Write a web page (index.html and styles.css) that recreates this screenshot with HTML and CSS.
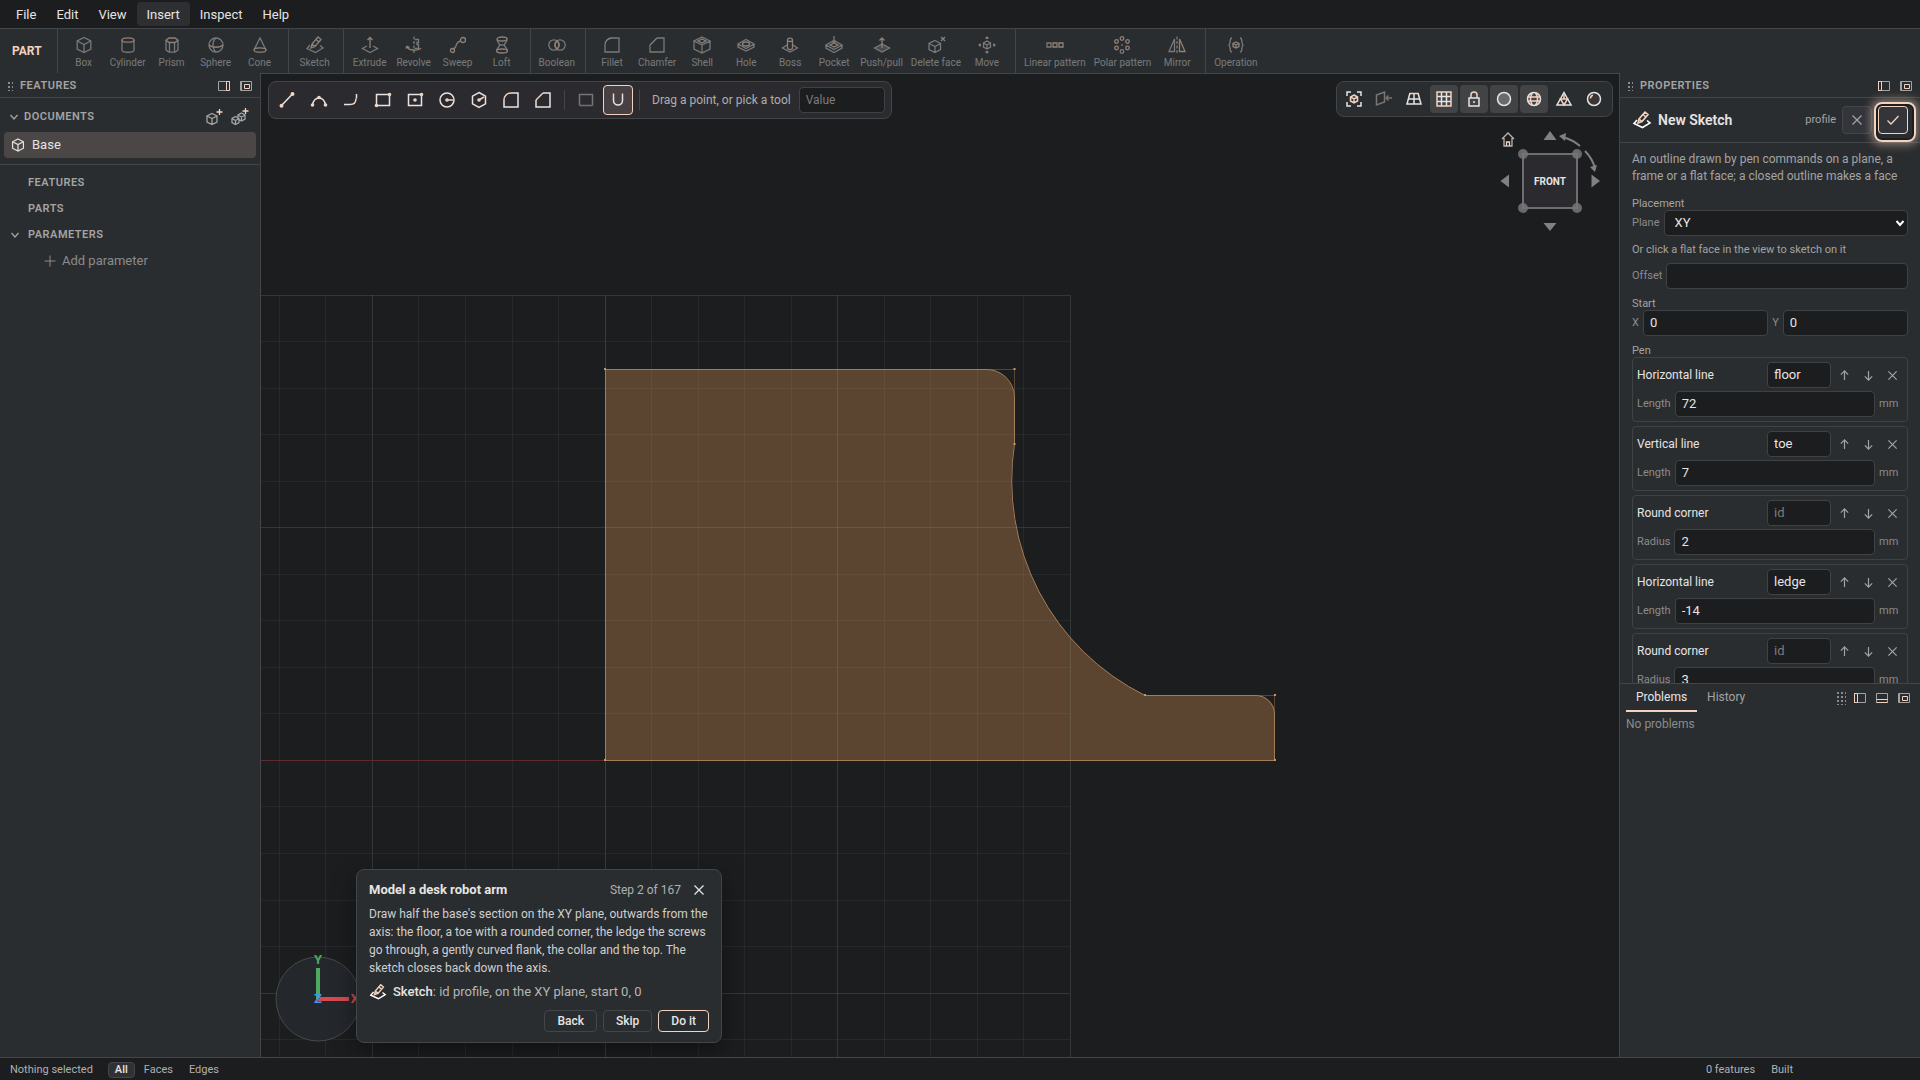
FILE: index.html
```html
<!DOCTYPE html>
<html lang="en">
<head>
<meta charset="utf-8">
<title>Base - Part</title>
<link rel="stylesheet" href="styles.css">
</head>
<body>
<svg class="sprite" aria-hidden="true">
  <symbol id="box" viewBox="0 0 20 20"><path d="M10 2.5 16.8 6v8L10 17.5 3.2 14V6Z"/><path d="M3.2 6 10 9.5 16.8 6M10 9.5v8"/></symbol>
  <symbol id="cylinder" viewBox="0 0 20 20"><path d="M4 5v10c0 3 12 3 12 0V5"/><ellipse class="t" cx="10" cy="5" rx="6" ry="2.2"/></symbol>
  <symbol id="prism" viewBox="0 0 20 20"><path d="M4 5.5v9.500l3 2.200h6l3-2.200V5.500M7.500 7.500v9.500M12.500 7.500v9.500"/><path class="t" d="M4 5.200 7 3h6l3 2.200-3 2.300H7Z"/></symbol>
  <symbol id="sphere" viewBox="0 0 20 20"><circle cx="10" cy="10" r="7"/><path d="M10 3c-4 3-4 11 0 14"/><path class="t" d="M3 10c3 3 11 3 14 0"/></symbol>
  <symbol id="cone" viewBox="0 0 20 20"><path d="M4 15 10 3l6 12"/><ellipse class="t" cx="10" cy="15" rx="6" ry="2.200"/></symbol>
  <symbol id="sketch" viewBox="0 0 20 20"><path d="m5 10-3 3.500 8.500 4L18 13l-3-2.500"/><path class="t" d="m6 13 1-4 6-7 3 2.500-6 7Zm1-4 3 2.500M11 4.500l3 2.500"/></symbol>
  <symbol id="extrude" viewBox="0 0 20 20"><path d="M7 11 2.500 13.500 10 17.500l7.500-4L13 11"/><path class="t" d="M10 13V2.500M7.500 5 10 2.500 12.500 5"/></symbol>
  <symbol id="revolve" viewBox="0 0 20 20"><path d="M10 1.500v3M10 6v3M10 10.500v3M10 15v3"/><path d="M11 4.500h3.500v3H13v2h1.500v4H11"/><path class="t" d="M3 11c0 5 12 5 14 2M3 11l-1 2.500M3 11l2.500 1.500"/></symbol>
  <symbol id="sweep" viewBox="0 0 20 20"><path d="M5 14c5-1 1-7 8-8"/><circle class="t" cx="15" cy="5" r="2.500"/><circle class="t" cx="4.500" cy="15.500" r="2"/></symbol>
  <symbol id="loft" viewBox="0 0 20 20"><ellipse class="t" cx="10" cy="4" rx="5" ry="2"/><ellipse class="t" cx="10" cy="16" rx="5.500" ry="2"/><path d="M5 4.500c0 3 2.500 3 2.500 5.500S4.500 13 4.500 16M15 4.500c0 3-2.500 3-2.500 5.500s3 3 3 6M7.500 10h5"/></symbol>
  <symbol id="boolean" viewBox="0 0 20 20"><circle cx="7" cy="10" r="5.200"/><circle cx="13" cy="10" r="5.200"/><path class="t" d="M10 6c-2.500 2.500-2.500 5.500 0 8 2.500-2.500 2.500-5.500 0-8Z"/></symbol>
  <symbol id="fillet" viewBox="0 0 20 20"><path d="M10 3h7v14H3v-7"/><path class="t" d="M3 10c0-4 3-7 7-7"/></symbol>
  <symbol id="chamfer" viewBox="0 0 20 20"><path d="M10 3h7v14H3v-7"/><path class="t" d="m3 10 7-7"/></symbol>
  <symbol id="shell" viewBox="0 0 20 20"><path d="M2 6v8l8 4 8-4V6M10 10v8M2 6l8 4 8-4-8-4Z"/><path class="t" d="m6 6 4 2 4-2-4-2Z"/></symbol>
  <symbol id="hole" viewBox="0 0 20 20"><path d="M2 9v3l8 4 8-4V9M2 9l8 4.500L18 9l-8-4.500Z"/><ellipse class="t" cx="10" cy="9" rx="3.500" ry="2"/></symbol>
  <symbol id="boss" viewBox="0 0 20 20"><path d="m7 10-4.500 3 7.500 4 7.500-4-4.500-3"/><path class="t" d="M7.500 5v8c0 2 5 2 5 0V5c0-2.500-5-2.500-5 0Zm0 0c0 2 5 2 5 0"/></symbol>
  <symbol id="pocket" viewBox="0 0 20 20"><path d="M2 10v3l8 4.500 8-4.500v-3M2 10l8 4.500 8-4.500-8-4.500Z"/><path class="t" d="m6 10 4 2 4-2-4-2Z"/><path d="M10 1v7M8 6l2 2 2-2"/></symbol>
  <symbol id="pushpull" viewBox="0 0 20 20"><path class="dim" d="m2.500 13 7.500-4 7.500 4-7.500 4Z"/><path class="t" d="M10 13V3M7.500 5.500 10 3l2.500 2.500"/></symbol>
  <symbol id="deleteface" viewBox="0 0 20 20"><path d="M9 5.500 14.500 8.500v6L9 17.500l-6-3v-6ZM3 8.500l6 3 5.500-3M9 11.500v6"/><path class="t" d="m15 2 4 4m0-4-4 4"/></symbol>
  <symbol id="move" viewBox="0 0 20 20"><path d="m10 6 3.500 2v4L10 14l-3.500-2V8ZM6.500 8l3.500 2 3.500-2M10 10v4"/><path class="t" d="M10 4V1.500M10 16v2.500M4 10H1.500M16 10h2.500M8.500 3h3M8.500 17h3M3 8.500v3M17 8.500v3"/></symbol>
  <symbol id="linear" viewBox="0 0 20 20"><path d="M2 8h4v4H2Z"/><path class="t" d="M8 8h4v4H8ZM14 8h4v4h-4Z"/></symbol>
  <symbol id="polar" viewBox="0 0 20 20"><g class="t"><circle cx="10" cy="3.500" r="1.800"/><circle cx="15.500" cy="6.500" r="1.800"/><circle cx="15.500" cy="13" r="1.800"/><circle cx="4.500" cy="6.500" r="1.800"/><circle cx="4.500" cy="13" r="1.800"/></g><circle cx="10" cy="16.500" r="1.800"/><path d="M10 9v2"/></symbol>
  <symbol id="mirror" viewBox="0 0 20 20"><path d="M7.500 4v12.500H2Z"/><path class="t" d="M12.500 4v12.500H18Z"/><path d="M10 1.500v3M10 6v3M10 10.500v3M10 15v3"/></symbol>
  <symbol id="operation" viewBox="0 0 20 20"><path d="M6 3C3 3 5 9 3 10c2 1 0 7 3 7M14 3c3 0 1 6 3 7-2 1 0 7-3 7"/><path class="t" d="m10 7 3 1.500v3L10 13l-3-1.500v-3ZM7 8.500l3 1.500 3-1.500M10 10v3"/></symbol>
  <symbol id="line" viewBox="0 0 20 20"><path d="M4.500 15.500 15.500 4"/><circle class="d" cx="4.500" cy="15.800" r="2"/><circle class="d" cx="15.500" cy="4" r="2"/></symbol>
  <symbol id="arc" viewBox="0 0 20 20"><path d="M3.500 15c1-5 4-7 6.500-7s5.500 2 6.500 7"/><circle class="d" cx="3.500" cy="15" r="1.800"/><circle class="d" cx="10" cy="7.500" r="1.800"/><circle class="d" cx="16.500" cy="15" r="1.800"/></symbol>
  <symbol id="curve" viewBox="0 0 20 20"><path d="M3 14.500h6"/><path class="t" d="M9 14.500c4 0 6-2 6-6"/><path d="M15.500 8.500V4"/></symbol>
  <symbol id="rect" viewBox="0 0 20 20"><path d="M3.500 4.500h13v11h-13Z"/><circle class="d" cx="3.500" cy="15.500" r="1.800"/><circle class="d" cx="16.500" cy="4.500" r="1.800"/></symbol>
  <symbol id="crect" viewBox="0 0 20 20"><path d="M3.500 4.500h13v11h-13Z"/><circle class="d" cx="10" cy="10" r="1.800"/><circle class="d" cx="16.500" cy="4.500" r="1.800"/></symbol>
  <symbol id="circle" viewBox="0 0 20 20"><circle cx="10" cy="10" r="7"/><circle class="d" cx="10" cy="10" r="1.800"/><path class="t" d="M10 10h6"/></symbol>
  <symbol id="hexagon" viewBox="0 0 20 20"><path d="m10 2.500 6.500 3.700v7.600L10 17.500l-6.500-3.700V6.200Z"/><circle class="d" cx="10" cy="10" r="1.800"/><path class="t" d="m10 10 5-3"/></symbol>
  <symbol id="square" viewBox="0 0 20 20"><path d="M3.500 15.500v-11h13v11"/><path class="t" d="M3.500 15.500h13"/></symbol>
  <symbol id="magnet" viewBox="0 0 20 20"><path d="M5.500 7v3.500a4.500 4.500 0 0 0 9 0V7"/><path class="t" d="M5.500 3.500V7M14.500 3.500V7"/></symbol>
  <symbol id="fit" viewBox="0 0 20 20"><path d="M3 7V3h4M13 3h4v4M17 13v4h-4M7 17H3v-4"/><path class="t" d="m10 6 3.500 2v4L10 14l-3.500-2V8ZM6.500 8l3.500 2 3.500-2M10 10v4"/></symbol>
  <symbol id="normal" viewBox="0 0 20 20"><path d="m2.500 6 8-3v10l-8 3Z"/><path class="t" d="M18 9h-6M14.500 6.500 12 9l2.500 2.500"/></symbol>
  <symbol id="persp" viewBox="0 0 20 20"><path d="M6 4 3 15h14L14 4M4.500 10h11M10 4v11"/><path class="t" d="M5.500 4.500h9"/></symbol>
  <symbol id="grid" viewBox="0 0 20 20"><path d="M7.500 3v14M12.500 3v14M3 7.500h14M3 12.500h14"/><path class="t" d="M3 3h14v14H3Z"/></symbol>
  <symbol id="lock" viewBox="0 0 20 20"><path d="M5 9h10v8H5ZM10 12v2"/><path class="t" d="M7 9V6c0-4 6-4 6 0v3"/></symbol>
  <symbol id="disc" viewBox="0 0 20 20"><circle class="dim" cx="10" cy="10" r="6.500"/></symbol>
  <symbol id="globe" viewBox="0 0 20 20"><circle cx="10" cy="10" r="6.500"/><path class="t" d="M3.500 8h13M3.500 12h13M8.500 3.500c-2.500 4-2.500 9 0 13M11.500 3.500c2.500 4 2.500 9 0 13"/></symbol>
  <symbol id="mesh" viewBox="0 0 20 20"><path d="M10 3.500 17 16H3Z"/><path class="t" d="M6.500 10h7L10 16ZM10 4v6"/></symbol>
  <symbol id="ball" viewBox="0 0 20 20"><circle class="dark" cx="10" cy="10" r="6.500"/><path class="t" d="M6.500 9.500c0-1.500 1-3 2.500-3.300"/></symbol>
  <symbol id="dockr" viewBox="0 0 12 10"><path d="M.500.500h11v9H.500Z"/><path class="t" d="M8.500 1v8M11.500.500v9M8.500.500h3M8.500 9.500h3"/></symbol>
  <symbol id="dockl" viewBox="0 0 12 10"><path d="M.500.500h11v9H.500Z"/><path class="t" d="M3.500 1v8M.500.500v9M.500.500h3M.500 9.500h3"/></symbol>
  <symbol id="dockb" viewBox="0 0 12 10"><path d="M.500.500h11v9H.500Z"/><path class="t" d="M.500 6.500h11M.500 9.500h11"/></symbol>
  <symbol id="float" viewBox="0 0 12 10"><path d="M.500.500h11v9H.500ZM1.500 1v8"/><path class="t" d="M4.500 3.500h5v4h-5Z"/></symbol>
  <symbol id="chevron" viewBox="0 0 10 10"><path d="m1.500 3 3.500 4 3.500-4"/></symbol>
  <symbol id="adddoc" viewBox="0 0 20 20"><path d="M8 6.500 13 9v6L8 17.500 3 15V9ZM3 9l5 2.500L13 9M8 11.500v6"/><path class="t" d="M15.500 2v6M12.500 5h6"/></symbol>
  <symbol id="addasm" viewBox="0 0 20 20"><path d="m5.500 9.500 3.500 2v4l-3.500 2-3.500-2v-4ZM2 11.500l3.500 2 3.500-2M5.500 13.500v4M11.500 6l3.500 2v4l-3.500 2L8 12V8ZM8 8l3.500 2L15 8M11.500 10v4"/><path class="t" d="M15.500 1v6M12.500 4h6"/></symbol>
  <symbol id="plus" viewBox="0 0 12 12"><path d="M6 .500v11M.500 6h11"/></symbol>
  <symbol id="x" viewBox="0 0 12 12"><path d="m1.500 1.500 9 9m0-9-9 9"/></symbol>
  <symbol id="check" viewBox="0 0 12 12"><path d="m.500 6.500 3.500 3.500L11.500 2"/></symbol>
  <symbol id="up" viewBox="0 0 12 12"><path d="M6 11V1M2 5l4-4 4 4"/></symbol>
  <symbol id="down" viewBox="0 0 12 12"><path d="M6 1v10M2 7l4 4 4-4"/></symbol>
</svg>

<div class="app">
  <nav class="menubar">
    <button>File</button><button>Edit</button><button>View</button><button class="open">Insert</button><button>Inspect</button><button>Help</button>
  </nav>

  <div class="ribbon">
    <strong class="mode">PART</strong>
    <div class="group">
      <button><svg><use href="#box"/></svg>Box</button>
      <button><svg><use href="#cylinder"/></svg>Cylinder</button>
      <button><svg><use href="#prism"/></svg>Prism</button>
      <button><svg><use href="#sphere"/></svg>Sphere</button>
      <button><svg><use href="#cone"/></svg>Cone</button>
    </div>
    <div class="group"><button><svg><use href="#sketch"/></svg>Sketch</button></div>
    <div class="group">
      <button><svg><use href="#extrude"/></svg>Extrude</button>
      <button><svg><use href="#revolve"/></svg>Revolve</button>
      <button><svg><use href="#sweep"/></svg>Sweep</button>
      <button><svg><use href="#loft"/></svg>Loft</button>
    </div>
    <div class="group"><button><svg><use href="#boolean"/></svg>Boolean</button></div>
    <div class="group">
      <button><svg><use href="#fillet"/></svg>Fillet</button>
      <button><svg><use href="#chamfer"/></svg>Chamfer</button>
      <button><svg><use href="#shell"/></svg>Shell</button>
      <button><svg><use href="#hole"/></svg>Hole</button>
      <button><svg><use href="#boss"/></svg>Boss</button>
      <button><svg><use href="#pocket"/></svg>Pocket</button>
      <button><svg><use href="#pushpull"/></svg>Push/pull</button>
      <button><svg><use href="#deleteface"/></svg>Delete face</button>
      <button><svg><use href="#move"/></svg>Move</button>
    </div>
    <div class="group">
      <button><svg><use href="#linear"/></svg>Linear pattern</button>
      <button><svg><use href="#polar"/></svg>Polar pattern</button>
      <button><svg><use href="#mirror"/></svg>Mirror</button>
    </div>
    <div class="group"><button><svg><use href="#operation"/></svg>Operation</button></div>
  </div>

  <main class="workspace">
    <aside class="side left">
      <header class="panel-head">
        <span class="grip"></span><h2>FEATURES</h2>
        <button aria-label="Dock right"><svg><use href="#dockr"/></svg></button>
        <button aria-label="Float"><svg><use href="#float"/></svg></button>
      </header>
      <section class="documents">
        <div class="tree-head">
          <svg class="chev"><use href="#chevron"/></svg><h3>DOCUMENTS</h3>
          <button aria-label="Add part"><svg><use href="#adddoc"/></svg></button>
          <button aria-label="Add assembly"><svg><use href="#addasm"/></svg></button>
        </div>
        <button class="doc"><svg><use href="#box"/></svg>Base</button>
      </section>
      <section class="tree">
        <h3>FEATURES</h3>
        <h3>PARTS</h3>
        <h3><svg class="chev"><use href="#chevron"/></svg>PARAMETERS</h3>
        <button class="add"><svg><use href="#plus"/></svg>Add parameter</button>
      </section>
    </aside>

    <section class="viewport">
      <svg class="scene" viewBox="261 74 1358 983" preserveAspectRatio="xMidYMid slice">
        <path class="profile" d="M605 760H1275V714A19 19 0 0 0 1256 695H1145A240 240 0 0 1 1014 444V397A28 28 0 0 0 986 369H605Z"/>
        <path class="minor" d="M279.500 295V1060M325.500 295V1060M418.500 295V1060M465.500 295V1060M512.500 295V1060M558.500 295V1060M651.500 295V1060M698.500 295V1060M744.500 295V1060M791.500 295V1060M884.500 295V1060M930.500 295V1060M977.500 295V1060M1023.500 295V1060M260 341.500H1070M260 388.500H1070M260 434.500H1070M260 481.500H1070M260 574.500H1070M260 620.500H1070M260 667.500H1070M260 713.500H1070M260 806.500H1070M260 853.500H1070M260 900.500H1070M260 946.500H1070M260 1039.500H1070"/>
        <path class="major" d="M372.500 295V1060M837.500 295V1060M1070.500 295V1060M260 295.500H1070M260 527.500H1070M260 993.500H1070"/>
        <path class="axis-x" d="M260 760.500H605"/>
        <path class="axis-z" d="M605.500 295V369M605.500 761V1060"/>
        <path class="guide" d="M986 369.500H1014.500V397M1256 695.500H1274.500V714"/>
        <path class="outline" d="M605.500 760.500H1274.500V714A19 19 0 0 0 1256 695.500H1145A240 240 0 0 1 1014.500 444V397A28 28 0 0 0 986 369.500H605.500Z"/>
        <path class="points" d="M604 760h2M1274 760h2M1274 695h2M1144 695h2M1013.500 444h2M1013.500 369h2M604 369h2"/>
      </svg>

      <div class="overlay top">
        <div class="sketchbar">
          <button aria-label="Line"><svg><use href="#line"/></svg></button>
          <button aria-label="Arc"><svg><use href="#arc"/></svg></button>
          <button aria-label="Tangent arc"><svg><use href="#curve"/></svg></button>
          <button aria-label="Rectangle"><svg><use href="#rect"/></svg></button>
          <button aria-label="Centre rectangle"><svg><use href="#crect"/></svg></button>
          <button aria-label="Circle"><svg><use href="#circle"/></svg></button>
          <button aria-label="Polygon"><svg><use href="#hexagon"/></svg></button>
          <button aria-label="Fillet"><svg><use href="#fillet"/></svg></button>
          <button aria-label="Chamfer"><svg><use href="#chamfer"/></svg></button>
          <i class="sep"></i>
          <button class="off" aria-label="Construction"><svg><use href="#square"/></svg></button>
          <button class="on" aria-label="Snap"><svg><use href="#magnet"/></svg></button>
          <i class="sep"></i>
          <label for="value">Drag a point, or pick a tool</label>
          <input id="value" placeholder="Value">
        </div>
        <div class="viewbar">
          <button aria-label="Fit"><svg><use href="#fit"/></svg></button>
          <button class="off" aria-label="Look at face"><svg><use href="#normal"/></svg></button>
          <button aria-label="Perspective"><svg><use href="#persp"/></svg></button>
          <button class="on" aria-label="Grid"><svg><use href="#grid"/></svg></button>
          <button class="on" aria-label="Lock"><svg><use href="#lock"/></svg></button>
          <button class="on" aria-label="Shaded"><svg><use href="#disc"/></svg></button>
          <button class="on" aria-label="Edges"><svg><use href="#globe"/></svg></button>
          <button aria-label="Mesh"><svg><use href="#mesh"/></svg></button>
          <button aria-label="Material"><svg><use href="#ball"/></svg></button>
        </div>
      </div>

      <svg class="cube" viewBox="1495 125 110 110">
        <path class="home" d="m1502 139 6-6 6 6M1504 138v8h8v-8"/><path class="home-door" d="M1506.500 146v-4h3v4"/>
        <path class="solid" d="m1550 131 6.500 9h-13ZM1550 231l6.500-8h-13ZM1500.500 181l8.500-6.500v13ZM1600 181l-8.500-6.500v13Z"/>
        <rect x="1523" y="154" width="54" height="54"/>
        <g class="corner"><circle cx="1523" cy="154" r="5"/><circle cx="1577" cy="154" r="5"/><circle cx="1523" cy="208" r="5"/><circle cx="1577" cy="208" r="5"/></g>
        <path class="turn" d="M1563 137q10 3 17 9M1585 151q8 8 10 18"/>
        <path class="solid" d="m1559 136 7-3-1 8ZM1595 172l-5-5 7-2Z"/>
        <text x="1550" y="185">FRONT</text>
      </svg>

      <svg class="triad" viewBox="275 952 88 92">
        <circle cx="318" cy="999" r="42"/>
        <path class="gy" d="M318 968v31"/><path class="gx" d="M318 999h31"/>
        <text class="ty" x="318" y="964">Y</text><text class="tx" x="355" y="1003">X</text><text class="tz" x="318" y="1003">Z</text>
      </svg>

      <article class="tour">
        <header><h2>Model a desk robot arm</h2><span>Step 2 of 167</span><button aria-label="Close"><svg><use href="#x"/></svg></button></header>
        <p>Draw half the base's section on the XY plane, outwards from the axis: the floor, a toe with a rounded corner, the ledge the screws go through, a gently curved flank, the collar and the top. The sketch closes back down the axis.</p>
        <div class="what"><svg><use href="#sketch"/></svg><span><b>Sketch</b>: id profile, on the XY plane, start 0, 0</span></div>
        <footer><button>Back</button><button>Skip</button><button class="primary">Do it</button></footer>
      </article>
    </section>

    <aside class="side right">
      <section class="props">
        <header class="panel-head">
          <span class="grip"></span><h2>PROPERTIES</h2>
          <button aria-label="Dock left"><svg><use href="#dockl"/></svg></button>
          <button aria-label="Float"><svg><use href="#float"/></svg></button>
        </header>
        <div class="op-head">
          <svg class="op-icon"><use href="#sketch"/></svg><h2>New Sketch</h2><span>profile</span>
          <button class="cancel" aria-label="Cancel"><svg><use href="#x"/></svg></button>
          <button class="accept" aria-label="Accept"><svg><use href="#check"/></svg></button>
        </div>
        <form class="fields">
          <p class="about">An outline drawn by pen commands on a plane, a frame or a flat face; a closed outline makes a face</p>
          <h4>Placement</h4>
          <div class="row"><label for="plane">Plane</label><div class="pick"><select id="plane"><option>XY</option></select><svg><use href="#chevron"/></svg></div></div>
          <p class="hint">Or click a flat face in the view to sketch on it</p>
          <div class="row"><label for="offset">Offset</label><input id="offset"></div>
          <h4 class="spaced">Start</h4>
          <div class="row"><label for="sx">X</label><input id="sx" value="0"><label for="sy">Y</label><input id="sy" value="0"></div>
          <h4 class="spaced">Pen</h4>
          <div class="pens">
            <fieldset>
              <div class="pen-head"><span>Horizontal line</span><input aria-label="id" placeholder="id" value="floor"><button type="button" aria-label="Up"><svg><use href="#up"/></svg></button><button type="button" aria-label="Down"><svg><use href="#down"/></svg></button><button type="button" aria-label="Remove"><svg><use href="#x"/></svg></button></div>
              <div class="row"><label for="p1">Length</label><input id="p1" value="72"><span>mm</span></div>
            </fieldset>
            <fieldset>
              <div class="pen-head"><span>Vertical line</span><input aria-label="id" placeholder="id" value="toe"><button type="button" aria-label="Up"><svg><use href="#up"/></svg></button><button type="button" aria-label="Down"><svg><use href="#down"/></svg></button><button type="button" aria-label="Remove"><svg><use href="#x"/></svg></button></div>
              <div class="row"><label for="p2">Length</label><input id="p2" value="7"><span>mm</span></div>
            </fieldset>
            <fieldset>
              <div class="pen-head"><span>Round corner</span><input aria-label="id" placeholder="id"><button type="button" aria-label="Up"><svg><use href="#up"/></svg></button><button type="button" aria-label="Down"><svg><use href="#down"/></svg></button><button type="button" aria-label="Remove"><svg><use href="#x"/></svg></button></div>
              <div class="row"><label for="p3">Radius</label><input id="p3" value="2"><span>mm</span></div>
            </fieldset>
            <fieldset>
              <div class="pen-head"><span>Horizontal line</span><input aria-label="id" placeholder="id" value="ledge"><button type="button" aria-label="Up"><svg><use href="#up"/></svg></button><button type="button" aria-label="Down"><svg><use href="#down"/></svg></button><button type="button" aria-label="Remove"><svg><use href="#x"/></svg></button></div>
              <div class="row"><label for="p4">Length</label><input id="p4" value="-14"><span>mm</span></div>
            </fieldset>
            <fieldset>
              <div class="pen-head"><span>Round corner</span><input aria-label="id" placeholder="id"><button type="button" aria-label="Up"><svg><use href="#up"/></svg></button><button type="button" aria-label="Down"><svg><use href="#down"/></svg></button><button type="button" aria-label="Remove"><svg><use href="#x"/></svg></button></div>
              <div class="row"><label for="p5">Radius</label><input id="p5" value="3"><span>mm</span></div>
            </fieldset>
          </div>
        </form>
      </section>
      <section class="issues">
        <header>
          <button class="tab active">Problems</button><button class="tab">History</button>
          <span class="grip wide"></span>
          <button class="dock" aria-label="Dock left"><svg><use href="#dockl"/></svg></button>
          <button class="dock" aria-label="Dock bottom"><svg><use href="#dockb"/></svg></button>
          <button class="dock" aria-label="Float"><svg><use href="#float"/></svg></button>
        </header>
        <p>No problems</p>
      </section>
    </aside>
  </main>

  <footer class="status">
    <span>Nothing selected</span>
    <div class="filter"><button class="on">All</button><button>Faces</button><button>Edges</button></div>
    <span class="count">0 features</span><span class="built">Built</span>
  </footer>
</div>
</body>
</html>
```
FILE: styles.css
```css
:root {
  --bg: #1c1d1f;
  --panel: #2a2d2f;
  --line: #434648;
  --text: #e6e4e3;
  --muted: #a3a3a3;
  --faint: #8a8b8c;
  --accent: #f3d3c0;
}
* { box-sizing: border-box; margin: 0; }
body { background: var(--bg); color: var(--text); font: 12px/16px Roboto, sans-serif; }
button, input, select { font: inherit; color: inherit; }
button { display: flex; align-items: center; justify-content: center; padding: 0; border: 0; background: none; }
svg { flex: none; fill: none; stroke: currentColor; stroke-width: 1.3; }
.sprite { position: absolute; width: 0; height: 0; }
.t { stroke: var(--accent); }
.d { fill: var(--accent); stroke: none; }
.dim { fill: #6a6a6c; }
.dark { fill: #3a3636; }
.app { display: flex; flex-direction: column; height: 100vh; }

.menubar { display: flex; height: 28px; padding: 2px 6px; }
.menubar button { padding: 1px 10px 0; font-size: 13px; border-radius: 4px; }
.menubar .open { background: #2e2f32; }

.ribbon { display: flex; height: 45px; background: var(--panel); border-top: 1px solid var(--line); }
.mode { display: flex; align-items: center; padding: 0 15px 0 12px; font-size: 12px; font-weight: 700; color: var(--accent); }
.group { display: flex; padding: 0 6px 0 4px; border-left: 1px solid var(--line); }
.group button { flex-direction: column; min-width: 44px; padding: 2px 4px 0; gap: 1px; font-size: 10px; line-height: 14px; color: #c4c4c4; opacity: .5; }
.group svg { width: 20px; height: 20px; }

.workspace { flex: 1; min-height: 0; display: grid; grid-template-columns: 260px minmax(0, 1fr) 300px; background: var(--panel); }
.side { min-height: 0; color: var(--muted); }
.panel-head { display: flex; align-items: center; height: 25px; padding: 2px 3px 0 7px; border-bottom: 1px solid var(--line); }
.panel-head h2 { flex: 1; margin-left: 7px; font-size: 11px; font-weight: 600; letter-spacing: .5px; }
.panel-head button { width: 22px; }
.panel-head svg, .dock svg { width: 12px; height: 10px; stroke-width: 1; }
.grip { width: 6px; height: 10px; background: radial-gradient(circle, #8a8b8c 1px, transparent 1px) 0 0 / 4px 4px; }
.grip.wide { width: 10px; height: 14px; margin: 0 3px 0 auto; }
h3 { display: flex; align-items: center; font-size: 11px; font-weight: 600; letter-spacing: .5px; }
.chev { width: 10px; height: 10px; }
.documents { padding-bottom: 6px; border-bottom: 1px solid var(--line); }
.tree-head { display: flex; align-items: center; height: 34px; padding: 3px 10px 0 9px; gap: 6px; }
.tree-head h3 { flex: 1; margin-left: -1px; }
.tree-head svg:not(.chev) { width: 20px; height: 20px; }
.doc { justify-content: flex-start; width: calc(100% - 8px); height: 26px; margin-left: 4px; padding-left: 6px; gap: 6px; font-size: 13px; color: var(--text); background: #4b4747; border-radius: 4px; }
.doc svg { width: 16px; height: 16px; stroke-width: 1.5; }
.tree { padding-top: 5px; }
.tree h3 { height: 26px; padding-left: 28px; }
.tree .chev { margin: 0 8px 0 -18px; }
.add { height: 26px; margin-left: 44px; gap: 6px; font-size: 13px; color: var(--faint); }
.add svg { width: 12px; height: 12px; stroke-width: 1; }

.viewport { position: relative; overflow: hidden; background: var(--bg); border: 1px solid var(--line); border-bottom: 0; }
.scene { position: absolute; inset: 0; width: 100%; height: 100%; stroke-width: 1; }
.profile { fill: #5b4430; stroke: none; }
.minor { stroke: rgba(170, 195, 190, .08); }
.major { stroke: rgba(170, 195, 190, .16); }
.axis-x { stroke: #5a2c30; }
.axis-z { stroke: #263f5c; }
.guide { stroke: #5b4430; }
.outline { stroke: #a37c58; }
.points { stroke: #cc9365; stroke-width: 2; }

.overlay.top { position: absolute; inset: 7px 6px auto 7px; display: flex; justify-content: space-between; align-items: flex-start; }
.sketchbar, .viewbar { display: flex; align-items: center; gap: 2px; border: 1px solid var(--line); border-radius: 8px; }
.sketchbar { height: 38px; padding: 0 6px 0 3px; background: #2b2b2f; }
.sketchbar button { width: 30px; height: 30px; border-radius: 4px; }
.sketchbar svg, .viewbar svg { width: 20px; height: 20px; stroke-width: 1.5; }
.sketchbar .on { background: #474144; border: 1px solid var(--accent); }
.off { opacity: .4; }
.sep { width: 1px; height: 20px; margin: 0 4px; background: var(--line); }
.sketchbar label { margin: 0 6px; color: #aeaeae; }
input, select { min-width: 0; height: 26px; padding: 0 6px 2px; background: var(--bg); border: 1px solid #3f4244; border-radius: 4px; font-size: 13px; }
input::placeholder { color: #7b7b7c; opacity: 1; }
.sketchbar input { width: 86px; padding-bottom: 0; font-size: 12px; }
.viewbar { height: 36px; padding: 0 4px 0 3px; background: var(--panel); }
.viewbar button { width: 28px; height: 28px; border-radius: 4px; }
.viewbar .on { background: #414345; }

.cube { position: absolute; top: 51px; right: 14px; width: 110px; height: 110px; }
.cube rect { fill: #2b2b2f; stroke: #6e6e70; stroke-width: 2; }
.corner { fill: #777779; stroke: none; opacity: .85; }
.solid { fill: #818182; stroke: none; }
.turn { stroke: #818182; stroke-width: 2; }
.home { stroke: #b5b5b5; }
.home-door { stroke: var(--accent); }
.cube text { fill: #e6e4e3; stroke: none; font-size: 10px; font-weight: 700; text-anchor: middle; }
.triad { position: absolute; left: 14px; bottom: 13px; width: 88px; height: 92px; }
.triad circle { fill: #24272c; stroke: #46494c; stroke-width: 1; }
.triad path { stroke-width: 4; }
.triad text { stroke: none; font-size: 13px; font-weight: 700; text-anchor: middle; }
.triad .gy { stroke: #4caa61; }
.triad .gx { stroke: #d84a4f; }
.triad .ty { fill: #4caa61; }
.triad .tx { fill: #d84a4f; }
.triad .tz { fill: #3c96ee; }

.tour { position: absolute; left: 95px; bottom: 14px; width: 366px; padding: 9px 12px 10px; background: var(--panel); border: 1px solid var(--line); border-radius: 8px; box-shadow: 0 8px 24px rgba(0, 0, 0, .4); }
.tour header { display: flex; align-items: center; height: 22px; gap: 12px; }
.tour h2 { flex: 1; font-size: 13px; font-weight: 700; }
.tour header span { color: #b0b0b0; }
.tour header button { width: 12px; margin-right: 4px; }
.tour header svg { width: 12px; height: 12px; }
.tour p { margin: 4px 0 1px; line-height: 18px; color: #cfcfcf; }
.what { display: flex; align-items: center; height: 28px; gap: 6px; font-size: 13px; color: #b5b5b5; }
.what svg { width: 18px; height: 18px; color: #fff; stroke-width: 1.6; }
.what b { font-weight: 500; color: var(--text); }
.tour footer { display: flex; justify-content: flex-end; gap: 6px; margin-top: 4px; }
.tour footer button { height: 22px; padding: 0 12px; font-weight: 500; border: 1px solid var(--line); border-radius: 4px; }
.tour footer .primary { border-color: var(--accent); }

.right { display: grid; grid-template-rows: minmax(0, 1fr) 38%; }
.props { display: flex; flex-direction: column; min-height: 0; overflow: hidden; }
.panel-head, .op-head { flex: none; }
.op-head { display: flex; align-items: center; height: 45px; padding: 0 12px; border-bottom: 1px solid var(--line); }
.op-icon { width: 20px; height: 20px; color: #fff; stroke-width: 1.6; }
.op-head h2 { flex: 1; margin-left: 6px; font-size: 14px; font-weight: 600; color: var(--text); }
.op-head span { font-size: 11px; margin-right: 6px; }
.op-head button { width: 30px; height: 28px; background: #33353a; border: 1px solid var(--line); border-radius: 4px; }
.op-head button svg { width: 12px; height: 12px; }
.op-head .accept { position: relative; margin-left: 6px; color: var(--accent); border-color: var(--accent); }
.accept::after { content: ""; position: absolute; inset: -5px -9px -9px -5px; border: 2px solid var(--accent); border-radius: 8px; box-shadow: 0 0 8px 3px rgba(243, 211, 192, .45), inset 0 0 0 2px var(--bg); }
.fields { flex: 1; min-height: 0; overflow: hidden; padding: 8px 12px 0; }
.about { line-height: 17px; }
.fields h4, .hint { font-size: 11px; font-weight: 400; line-height: 12px; }
.fields h4 { margin-top: 13px; }
.hint { margin: 8px 0 7px; }
.fields h4.spaced { margin-top: 9px; }
.row { display: flex; align-items: center; gap: 4px; height: 26px; }
.row label, .row span { font-size: 11px; color: var(--faint); }
.row input { flex: 1; width: 0; }
.row input, .pen-head input, select { color: var(--text); }
.pick { position: relative; flex: 1; display: flex; }
.pick select { flex: 1; padding: 0 10px; appearance: none; }
.pick svg { position: absolute; right: 3px; top: 8px; width: 10px; height: 10px; color: #fff; stroke-width: 2; }
.pens { display: grid; gap: 4px; }
fieldset { display: grid; gap: 3px; min-width: 0; padding: 4px 3px 4px 4px; border: 1px solid #3f4244; border-radius: 4px; }
fieldset .row span { width: 25px; }
.pen-head { display: flex; align-items: center; }
.pen-head span { flex: 1; color: var(--text); }
.pen-head input { width: 64px; margin-right: 1px; }
.pen-head button { width: 24px; height: 24px; }
.pen-head svg { width: 11px; height: 11px; }
.issues { border-top: 1px solid var(--line); }
.issues header { display: flex; align-items: center; height: 28px; padding: 0 5px 0 6px; }
.tab { height: 28px; padding: 0 10px 1px; color: var(--muted); border-bottom: 2px solid transparent; }
.tab.active { color: var(--text); border-color: var(--accent); }
.dock { width: 22px; height: 22px; }
.issues p { padding: 4px 6px; color: var(--faint); }

.status { display: flex; align-items: center; height: 23px; padding: 1px 10px 0; border-top: 1px solid var(--line); font-size: 11px; color: #b0b0b0; }
.filter { display: flex; flex: 1; margin-left: 15px; gap: 2px; }
.filter button { height: 16px; padding: 0 6px; border: 1px solid transparent; border-radius: 4px; }
.filter .on { color: var(--text); background: #303134; border-color: var(--line); font-weight: 500; }
.count { margin-right: 16px; }
.built { margin-right: 117px; }
```
